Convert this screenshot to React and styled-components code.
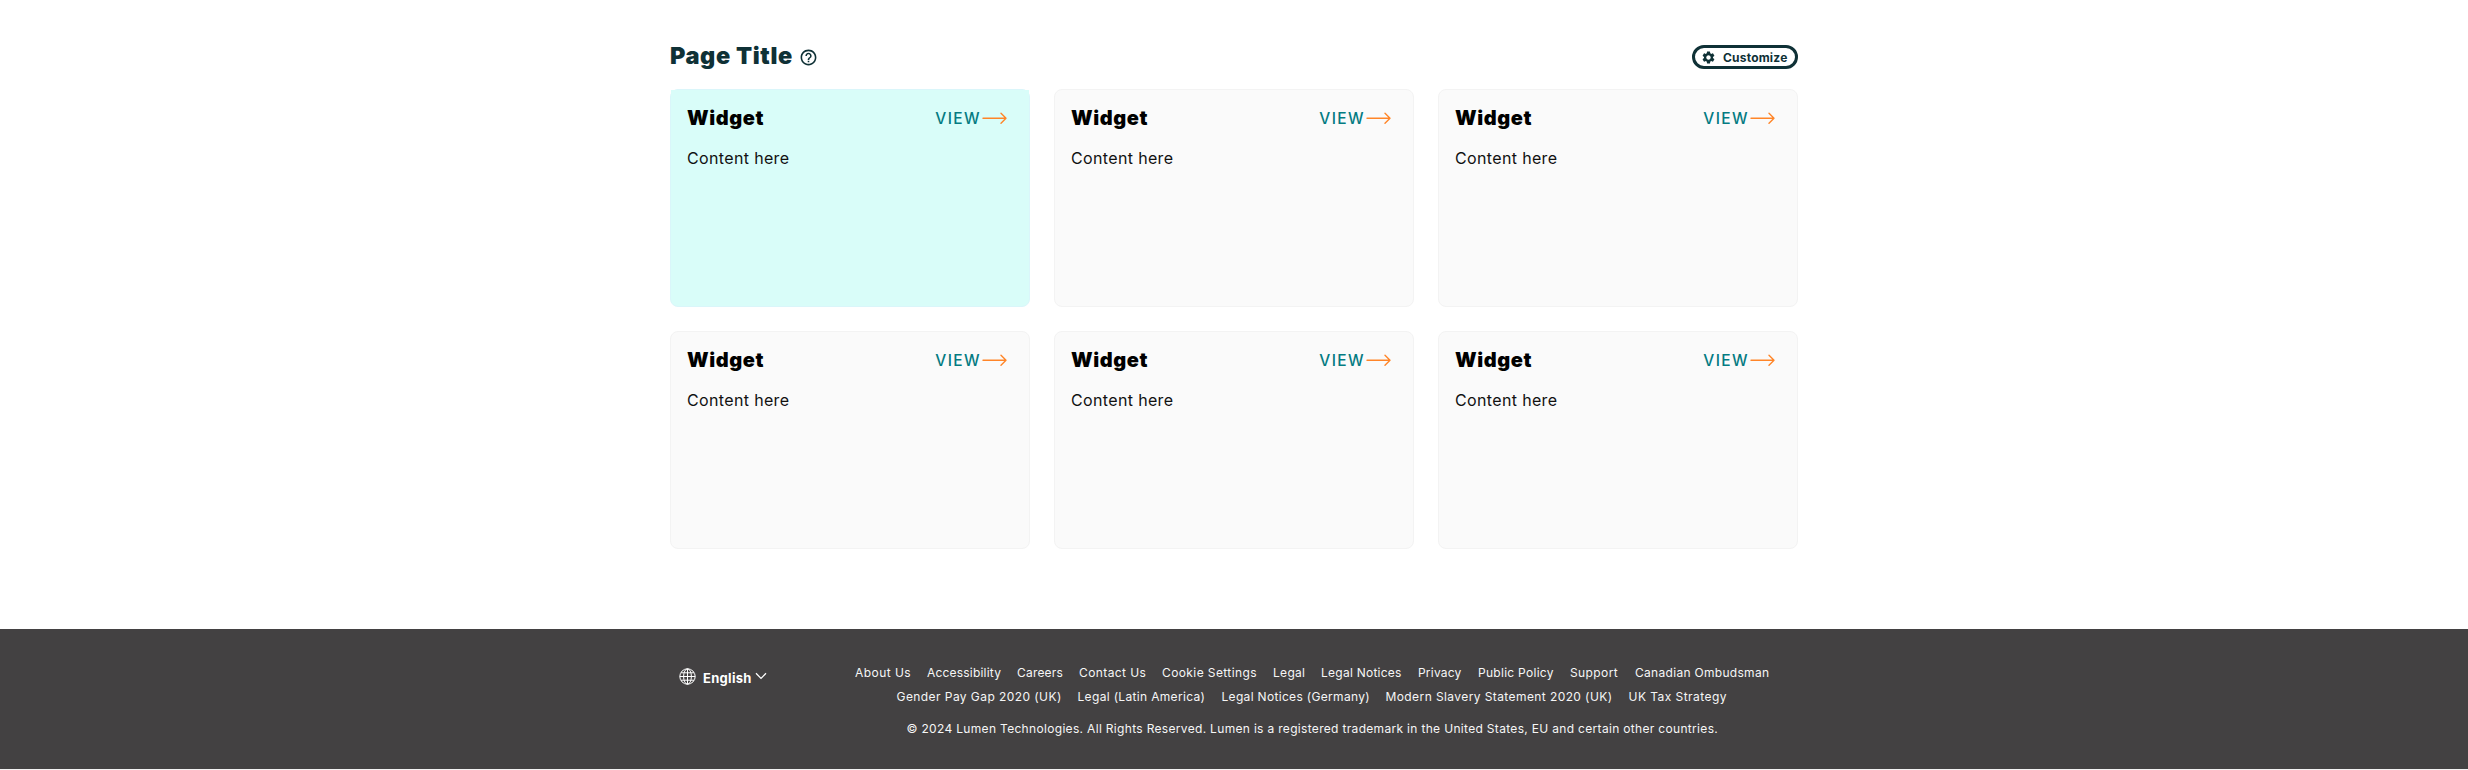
import React from "react";
import styled, { createGlobalStyle } from "styled-components";
import { MdHelpOutline, MdSettings } from "react-icons/md";

const GlobalStyle = createGlobalStyle`
  * { box-sizing: border-box; }
  body {
    margin: 0;
    background: #fff;
    color: #000;
    font-family: Inter, "Open Sans", "Liberation Sans", sans-serif;
  }
`;

const Page = styled.div`
  height: 770px;
  display: flex;
  flex-direction: column;
  background: #f3f2f2;
`;

const Main = styled.main`
  height: 629px;
  padding-top: 45px;
  background: #fff;
`;

const Container = styled.div`
  width: 1128px;
  margin: 0 auto;
`;

const TitleBar = styled.header`
  height: 24px;
  margin-bottom: 20px;
  display: flex;
  align-items: center;
  justify-content: space-between;
  color: #0f3136;
`;

const TitleGroup = styled.div`
  display: flex;
  align-items: center;
  svg { display: block; }
`;

const Title = styled.h1`
  width: 129px;
  margin: 0 0 2px;
  font-size: 23.5px;
  line-height: 24px;
  font-weight: 900;
  letter-spacing: 0.6px;
  white-space: nowrap;
`;

const CustomizeButton = styled.button`
  width: 106px;
  height: 24px;
  padding: 0 0 0 6px;
  display: flex;
  align-items: center;
  gap: 7px;
  border: 3px solid #0f3136;
  border-radius: 12px;
  background: #fff;
  color: #0f3136;
  font: 700 12px/18px Inter, sans-serif;
  letter-spacing: 0.2px;
  white-space: nowrap;
  svg { flex: none; }
`;

const ButtonLabel = styled.span`
  padding-top: 1px;
`;

const Grid = styled.div`
  display: grid;
  grid-template-columns: repeat(3, 360px);
  grid-auto-rows: 218px;
  gap: 24px;
`;

const Card = styled.section`
  border: 1px solid ${(p) => (p.$active ? "#daf6fa" : "#f3f3f3")};
  border-radius: 8px;
  background: ${(p) => (p.$active ? "#d9fdf9" : "#fafafa")};
`;

const CardHeader = styled.div`
  height: 56px;
  padding: 0 22px 0 16px;
  display: flex;
  align-items: center;
  justify-content: space-between;
  background: ${(p) => (p.$active ? "#d9fdf9" : "transparent")};
`;

const CardTitle = styled.h2`
  margin: 0;
  font-size: 20px;
  line-height: 24px;
  font-weight: 900;
  letter-spacing: 0.6px;
`;

const ViewLink = styled.a`
  padding-top: 1px;
  display: flex;
  align-items: center;
  gap: 1px;
  color: #047b82;
  font-size: 15.5px;
  line-height: 20px;
  font-weight: 500;
  letter-spacing: 1.4px;
  svg { margin-bottom: 2px; }
`;

const CardBody = styled.p`
  margin: 0;
  padding: 0 16px;
  color: #111;
  font-size: 16px;
  line-height: 24px;
  letter-spacing: 0.35px;
`;

const Footer = styled.footer`
  height: 140px;
  padding-top: 32px;
  background: #434142;
  color: #f6f6f6;
`;

const FooterInner = styled(Container)`
  display: flex;
`;

const Language = styled.div`
  width: 153px;
  flex: none;
  height: 24px;
  margin-top: 3px;
  padding-left: 8.5px;
  display: flex;
  align-items: center;
  color: #fff;
`;

const LanguageName = styled.span`
  width: 49px;
  margin: 3px 3px 0 7.5px;
  font-size: 13px;
  font-weight: 700;
  line-height: 18px;
  letter-spacing: 0.3px;
  white-space: nowrap;
`;

const FooterContent = styled.div`
  width: 978px;
  flex: none;
  display: flex;
  flex-direction: column;
  align-items: center;
  font-size: 12px;
  line-height: 24px;
`;

const LinkRow = styled.nav`
  height: 24px;
  display: flex;
  gap: 16px;
`;

const FooterLink = styled.a`
  width: ${(p) => p.$width}px;
  letter-spacing: ${(p) => p.$tracking || 0}px;
  white-space: nowrap;
`;

const Copyright = styled.p`
  width: 811px;
  margin: 8px 0 0;
  letter-spacing: 0.32px;
  white-space: nowrap;
`;

const Arrow = () => (
  <svg width="25" height="12" viewBox="0 0 25 12" fill="none" stroke="#ff8528" strokeWidth="1.4" strokeLinecap="round" strokeLinejoin="round">
    <path d="M1 6.2H24M19 1.2L24 6.2L19 11.2" />
  </svg>
);

const Globe = () => (
  <svg width="17" height="17" viewBox="0 0 17 17" fill="none" stroke="currentColor" strokeWidth="1">
    <circle cx="8.5" cy="8.5" r="7.7" />
    <ellipse cx="8.5" cy="8.5" rx="3.9" ry="7.7" />
    <path d="M8.5 .8v15.4M.8 8.5h15.4M2 4.8h13M2 12.2h13" />
  </svg>
);

const Chevron = () => (
  <svg width="12" height="8" viewBox="0 0 12 8" fill="none" stroke="currentColor" strokeWidth="1.3">
    <path d="M1 1.3L6 6.4L11 1.3" />
  </svg>
);

const primaryLinks = [
  ["About Us", 56, 0.45], ["Accessibility", 74, 0.2], ["Careers", 46, 0.2],
  ["Contact Us", 67, 0.4], ["Cookie Settings", 95, 0.4], ["Legal", 32, 0.3],
  ["Legal Notices", 81, 0.25], ["Privacy", 44, 0.2], ["Public Policy", 76, 0.28],
  ["Support", 49, 0.4], ["Canadian Ombudsman", 134, 0.3],
];

const regionalLinks = [
  ["Gender Pay Gap 2020 (UK)", 165, 0.43], ["Legal (Latin America)", 128, 0.33],
  ["Legal Notices (Germany)", 148, 0.32],
  ["Modern Slavery Statement 2020 (UK)", 227, 0.41], ["UK Tax Strategy", 99, 0.45],
];

const Links = ({ items }) => (
  <LinkRow>
    {items.map(([label, width, tracking]) => (
      <FooterLink key={label} $width={width} $tracking={tracking}>{label}</FooterLink>
    ))}
  </LinkRow>
);

const Widget = ({ active }) => (
  <Card $active={active}>
    <CardHeader $active={active}>
      <CardTitle>Widget</CardTitle>
      <ViewLink>VIEW<Arrow /></ViewLink>
    </CardHeader>
    <CardBody>Content here</CardBody>
  </Card>
);

export default function App() {
  return (
    <Page>
      <GlobalStyle />
      <Main>
        <Container>
          <TitleBar>
            <TitleGroup>
              <Title>Page Title</Title>
              <MdHelpOutline size={19} />
            </TitleGroup>
            <CustomizeButton><MdSettings size={15} /><ButtonLabel>Customize</ButtonLabel></CustomizeButton>
          </TitleBar>
          <Grid>
            {[0, 1, 2, 3, 4, 5].map((i) => <Widget key={i} active={i === 0} />)}
          </Grid>
        </Container>
      </Main>
      <Footer>
        <FooterInner>
          <Language><Globe /><LanguageName>English</LanguageName><Chevron /></Language>
          <FooterContent>
            <Links items={primaryLinks} />
            <Links items={regionalLinks} />
            <Copyright>© 2024 Lumen Technologies. All Rights Reserved. Lumen is a registered trademark in the United States, EU and certain other countries.</Copyright>
          </FooterContent>
        </FooterInner>
      </Footer>
    </Page>
  );
}
